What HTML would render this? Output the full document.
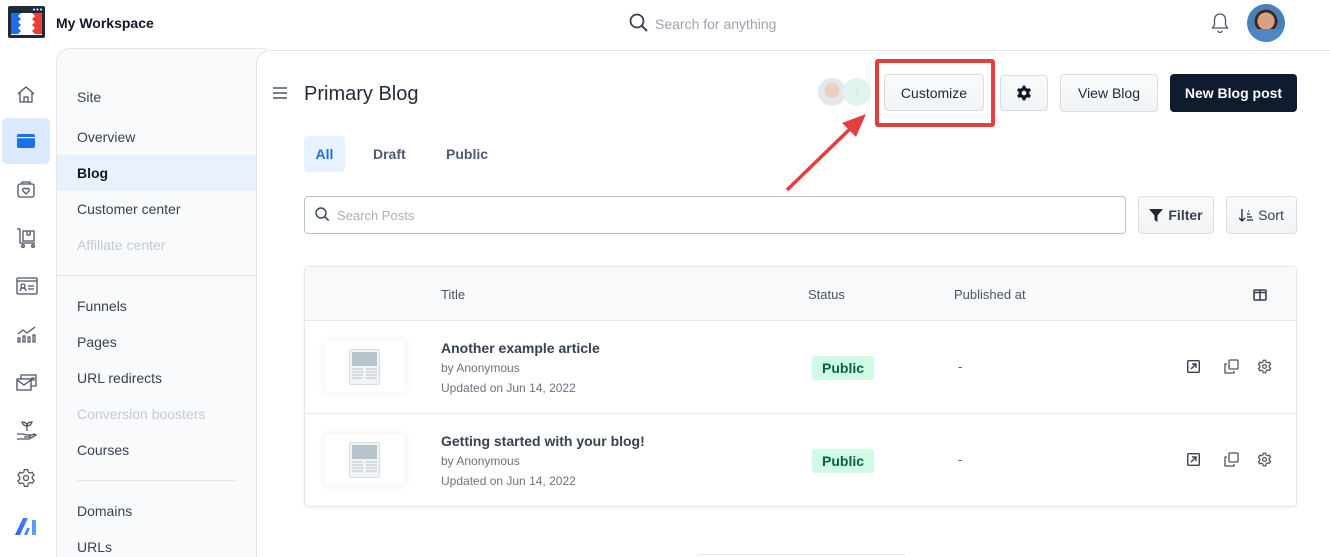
<!DOCTYPE html>
<html style="overflow:hidden;width:1330px;height:557px"><head><meta charset="utf-8">
<style>
*{box-sizing:border-box;margin:0;padding:0}
body{width:1330px;height:557px;overflow:hidden;background:#fff;font-family:"Liberation Sans",sans-serif;color:#1f2937;position:relative}
.a{position:absolute}
.nav{font-size:14px;color:#374151}
.btn{position:absolute;border:1px solid #d8dde3;border-radius:4px;background:linear-gradient(#fafbfc,#f1f3f5);font-size:14px;color:#1f2937;display:flex;align-items:center;justify-content:center;gap:5px}
.ic{position:absolute;left:16px}
.row{position:absolute;left:305px;width:991px;border-top:1px solid #e5e7eb}
.thumb{position:absolute;left:20px;top:20px;width:80px;height:51px;background:#fff;border-radius:4px;box-shadow:0 0 10px rgba(0,0,0,.08)}
.badge{position:absolute;left:507px;background:#d1fae5;color:#065f46;font-size:14px;font-weight:bold;padding:4px 10px;border-radius:3px}
</style></head><body>
<svg class="a" style="left:8px;top:6px" width="37" height="32" viewBox="0 0 37 32"><rect width="37" height="32" rx="2" fill="#1f2937"/><rect x="3" y="7" width="31" height="22" fill="#fff"/><path d="M3 7h10l-3 3 3 3-3 3 3 3-3 3 3 3-3 3h-7z" fill="#1d6ee8"/><path d="M34 7h-10l3 3-3 3 3 3-3 3 3 3-3 3 3 3h7z" fill="#ef3e36"/><circle cx="26" cy="3.5" r="1" fill="#fff"/><circle cx="29.5" cy="3.5" r="1" fill="#fff"/><circle cx="33" cy="3.5" r="1" fill="#fff"/></svg>
<div class="a" style="left:56px;top:15px;font-size:14px;font-weight:bold;color:#111827">My Workspace</div>
<svg class="a" style="left:629px;top:13px" width="20" height="20" viewBox="0 0 20 20"><circle cx="8" cy="8" r="6.5" fill="none" stroke="#374151" stroke-width="1.8"/><path d="M13 13l5 5" stroke="#374151" stroke-width="2"/></svg>
<div class="a" style="left:655px;top:16px;font-size:14px;color:#9ca3af">Search for anything</div>
<svg class="a" style="left:1211px;top:12px" width="18" height="22" viewBox="0 0 18 22"><path d="M9 2c-3.5 0-5.5 2.5-5.5 6v5l-2 3h15l-2-3V8c0-3.5-2-6-5.5-6z" fill="none" stroke="#4b5563" stroke-width="1.3"/><path d="M7 18.5a2 2 0 004 0" fill="none" stroke="#4b5563" stroke-width="1.3"/></svg>
<div class="a" style="left:1247px;top:4px;width:38px;height:38px;border-radius:50%;background:radial-gradient(circle at 50% 45%,#d9a184 0 30%,#3a2a1e 31% 40%,#4a7fb8 41%);overflow:hidden"><div style="position:absolute;left:0;right:0;bottom:0;height:13px;background:#4f86c6"></div></div>
<div class="a" style="left:2px;top:118px;width:48px;height:46px;background:#dbeafe;border-radius:5px"></div>
<svg class="ic" style="top:84px" width="20" height="20" viewBox="0 0 20 20" fill="none" stroke="#4b5563" stroke-width="1.3"><path d="M2 10L10 3l8 7M4 8.5V18h12V8.5M8 18v-5h4v5"/></svg>
<svg class="ic" style="top:131px" width="20" height="20" viewBox="0 0 20 20"><rect x="1" y="3" width="18" height="14" rx="2" fill="#1d6ee8"/><rect x="1" y="6" width="18" height="1.2" fill="#fff"/></svg>
<svg class="ic" style="top:179px" width="20" height="20" viewBox="0 0 20 20" fill="none" stroke="#4b5563" stroke-width="1.3"><rect x="2" y="5" width="16" height="13" rx="2"/><path d="M6 5V3h8v2M10 15l-3-3a1.6 1.6 0 013-2 1.6 1.6 0 013 2z"/></svg>
<svg class="ic" style="top:227px" width="22" height="22" viewBox="0 0 22 22" fill="none" stroke="#4b5563" stroke-width="1.3"><path d="M1 2h3v14h15M7 4h11v10H7zM11 4v4h3V4"/><circle cx="7" cy="19" r="1.3"/><circle cx="17" cy="19" r="1.3"/></svg>
<svg class="ic" style="top:276px" width="22" height="20" viewBox="0 0 22 20" fill="none" stroke="#4b5563" stroke-width="1.3"><rect x="1" y="2" width="20" height="16" rx="1"/><path d="M1 5h20"/><circle cx="7" cy="10" r="2"/><path d="M4 15a3 3 0 016 0M12 10h6M12 13h6"/></svg>
<svg class="ic" style="top:324px" width="22" height="20" viewBox="0 0 22 20" fill="none" stroke="#4b5563" stroke-width="1.2"><path d="M2 10l5-4 4 3 8-6"/><rect x="2" y="14" width="2" height="4"/><rect x="7" y="12" width="2" height="6"/><rect x="12" y="13" width="2" height="5"/><rect x="17" y="11" width="2" height="7"/></svg>
<svg class="ic" style="top:371px" width="22" height="22" viewBox="0 0 22 22" fill="none" stroke="#4b5563" stroke-width="1.3"><rect x="1" y="8" width="14" height="11"/><path d="M1 9l7 5 7-5M5 8V4h15v11h-5M16 7h2v2h-2z"/></svg>
<svg class="ic" style="top:419px" width="22" height="22" viewBox="0 0 22 22" fill="none" stroke="#4b5563" stroke-width="1.3"><path d="M11 12V5M11 7c-2 0-4-1-5-4 3 0 5 1 5 4zM11 7c2 0 4-1 5-4-3 0-5 1-5 4zM1 15h5l5 1h3v2H8M1 20h12l7-4-2-1-5 2"/></svg>
<svg class="ic" style="top:468px" width="20" height="20" viewBox="0 0 24 24" fill="none" stroke="#4b5563" stroke-width="1.5"><circle cx="12" cy="12" r="3"/><path d="M10 2h4l.6 2.8 2.3 1.3 2.7-1 2 3.4-2.1 1.9v2.6l2.1 1.9-2 3.4-2.7-1-2.3 1.3L14 22h-4l-.6-2.8-2.3-1.3-2.7 1-2-3.4 2.1-1.9v-2.6L2.4 8.5l2-3.4 2.7 1 2.3-1.3z"/></svg>
<svg class="ic" style="top:516px;left:14px" width="24" height="20" viewBox="0 0 24 20"><defs><linearGradient id="g" x1="0" x2="1"><stop offset="0" stop-color="#2563eb"/><stop offset="1" stop-color="#60a5fa"/></linearGradient></defs><path d="M1 19L9 2h5L6 19zM10 19l3-7h3l-3 7zM18 19V4h4v15z" fill="url(#g)"/></svg>
<div class="a" style="left:56px;top:48px;width:210px;height:509px;background:#f9fafb;border:1px solid #e5e7eb;border-bottom:none;border-radius:14px 0 0 0"></div>
<div class="a" style="left:57px;top:155px;width:200px;height:36px;background:#e8f1fd"></div>
<div class="a nav" style="left:77px;top:89px">Site</div>
<div class="a nav" style="left:77px;top:129px">Overview</div>
<div class="a nav" style="left:77px;top:165px;font-weight:bold;color:#111827">Blog</div>
<div class="a nav" style="left:77px;top:201px">Customer center</div>
<div class="a nav" style="left:77px;top:237px;color:#c4c9d0">Affiliate center</div>
<div class="a" style="left:57px;top:275px;width:200px;height:1px;background:#e5e7eb"></div>
<div class="a nav" style="left:77px;top:298px">Funnels</div>
<div class="a nav" style="left:77px;top:334px">Pages</div>
<div class="a nav" style="left:77px;top:370px">URL redirects</div>
<div class="a nav" style="left:77px;top:406px;color:#c4c9d0">Conversion boosters</div>
<div class="a nav" style="left:77px;top:442px">Courses</div>
<div class="a" style="left:77px;top:480px;width:159px;height:1px;background:#e5e7eb"></div>
<div class="a nav" style="left:77px;top:503px">Domains</div>
<div class="a nav" style="left:77px;top:539px">URLs</div>
<div class="a" style="left:256px;top:50px;width:1074px;height:507px;background:#fff;border:1px solid #dfe4ea;border-right:none;border-bottom:none;border-radius:14px 0 0 0"></div>
<svg class="a" style="left:273px;top:87px" width="14" height="12" viewBox="0 0 14 12"><path d="M0 1h14M0 6h14M0 11h14" stroke="#4b5563" stroke-width="1.6"/></svg>
<div class="a" style="left:304px;top:83px;font-size:20px;color:#1f2937">Primary Blog</div>
<div class="a" style="left:818px;top:78px;width:28px;height:28px;border-radius:50%;background:radial-gradient(circle at 50% 45%,#e4c1a8 0 35%,#d9dfe6 36%);opacity:.75"></div>
<div class="a" style="left:843px;top:78px;width:28px;height:28px;border-radius:50%;background:#e0f5f0;color:#c7e8e0;font-size:11px;text-align:center;line-height:28px">I</div>
<div class="btn" style="left:884px;top:74px;width:100px;height:37px">Customize</div>
<div class="a" style="left:875px;top:59px;width:120px;height:68px;border:4px solid #e53e3e;border-radius:3px"></div>
<div class="btn" style="left:1000px;top:75px;width:48px;height:36px"><svg width="16" height="16" viewBox="0 0 24 24"><path fill="#111827" fill-rule="evenodd" d="M10 1h4l.7 3.2 2.6 1.5 3.1-1 2 3.5-2.4 2.2v3.2l2.4 2.2-2 3.5-3.1-1-2.6 1.5L14 23h-4l-.7-3.2-2.6-1.5-3.1 1-2-3.5 2.4-2.2v-3.2L1.6 8.2l2-3.5 3.1 1 2.6-1.5zM12 8.5a3.5 3.5 0 100 7 3.5 3.5 0 000-7z"/></svg></div>
<div class="btn" style="left:1060px;top:74px;width:98px;height:38px">View Blog</div>
<div class="btn" style="left:1170px;top:74px;width:127px;height:38px;background:#111b2e;border-color:#111b2e;color:#fff;font-weight:bold">New Blog post</div>
<svg class="a" style="left:780px;top:110px" width="90" height="85" viewBox="0 0 90 85"><path d="M7 80L75 14" stroke="#e53e3e" stroke-width="3.5"/><path d="M86 4L62 13l14 14z" fill="#e53e3e"/></svg>
<div class="a" style="left:304px;top:136px;width:41px;height:36px;background:#e8f2fe;border-radius:4px;color:#1d6ee8;font-size:14px;font-weight:bold;text-align:center;line-height:36px">All</div>
<div class="a" style="left:373px;top:146px;font-size:14px;font-weight:bold;color:#4a5b74">Draft</div>
<div class="a" style="left:446px;top:146px;font-size:14px;font-weight:bold;color:#4a5b74">Public</div>
<div class="a" style="left:304px;top:196px;width:822px;height:38px;border:1px solid #b7c3cf;border-radius:4px"></div>
<svg class="a" style="left:315px;top:207px" width="15" height="15" viewBox="0 0 15 15"><circle cx="6" cy="6" r="5" fill="none" stroke="#374151" stroke-width="1.4"/><path d="M9.7 9.7l4 4" stroke="#374151" stroke-width="1.5"/></svg>
<div class="a" style="left:337px;top:208px;font-size:13px;color:#a9b1bb">Search Posts</div>
<div class="btn" style="left:1138px;top:196px;width:76px;height:38px;font-weight:bold;color:#374151"><svg width="14" height="13" viewBox="0 0 14 13"><path d="M0 0h14L8.5 6.5V13L5.5 11V6.5z" fill="#1f2937"/></svg>Filter</div>
<div class="btn" style="left:1226px;top:196px;width:71px;height:38px;color:#374151"><svg width="14" height="13" viewBox="0 0 14 13" fill="none" stroke="#1f2937" stroke-width="1.3"><path d="M3 0v12M0 9l3 3 3-3M8 5h3M8 8h5M8 11h6M9 2h1"/></svg>Sort</div>
<div class="a" style="left:304px;top:266px;width:993px;height:241px;border:1px solid #e5e7eb;border-radius:4px;box-shadow:0 1px 3px rgba(0,0,0,.06)"></div>
<div class="a" style="left:305px;top:267px;width:991px;height:53px;background:#f8f9fa"></div>
<div class="a" style="left:441px;top:287px;font-size:13px;color:#4b5563">Title</div>
<div class="a" style="left:808px;top:287px;font-size:13px;color:#4b5563">Status</div>
<div class="a" style="left:954px;top:287px;font-size:13px;color:#4b5563">Published at</div>
<svg class="a" style="left:1253px;top:289px" width="14" height="12" viewBox="0 0 14 12" fill="none" stroke="#374151" stroke-width="1.6"><rect x="1" y="1" width="12" height="10" rx="1"/><path d="M7 1v10M1 3.5h12"/></svg>
<div class="row" style="top:320px;height:93px">
 <div class="thumb"><svg style="position:absolute;left:24px;top:8px" width="31" height="36" viewBox="0 0 31 36"><rect x=".5" y=".5" width="30" height="35" rx="2" fill="#f1f3f5" stroke="#d5dbe1"/><rect x="3" y="3" width="25" height="14" fill="#b8c4cc"/><path d="M3 20h11M3 23h11M3 26h11M3 29h11M17 20h11M17 23h11M17 26h11M17 29h11" stroke="#b8c4cc"/></svg></div>
 <div class="a" style="left:136px;top:19px;font-size:14px;font-weight:bold;color:#374151">Another example article</div>
 <div class="a" style="left:136px;top:40px;font-size:12px;color:#6b7280">by Anonymous</div>
 <div class="a" style="left:136px;top:60px;font-size:12px;color:#6b7280">Updated on Jun 14, 2022</div>
 <div class="badge" style="top:35px">Public</div>
 <div class="a" style="left:653px;top:38px;font-size:13px;color:#4b5563">-</div>
</div>
<div class="row" style="top:413px;height:93px">
 <div class="thumb"><svg style="position:absolute;left:24px;top:8px" width="31" height="36" viewBox="0 0 31 36"><rect x=".5" y=".5" width="30" height="35" rx="2" fill="#f1f3f5" stroke="#d5dbe1"/><rect x="3" y="3" width="25" height="14" fill="#b8c4cc"/><path d="M3 20h11M3 23h11M3 26h11M3 29h11M17 20h11M17 23h11M17 26h11M17 29h11" stroke="#b8c4cc"/></svg></div>
 <div class="a" style="left:136px;top:19px;font-size:14px;font-weight:bold;color:#374151">Getting started with your blog!</div>
 <div class="a" style="left:136px;top:40px;font-size:12px;color:#6b7280">by Anonymous</div>
 <div class="a" style="left:136px;top:60px;font-size:12px;color:#6b7280">Updated on Jun 14, 2022</div>
 <div class="badge" style="top:35px">Public</div>
 <div class="a" style="left:653px;top:38px;font-size:13px;color:#4b5563">-</div>
</div>
<svg class="a" style="left:1187px;top:360px" width="13" height="13" viewBox="0 0 13 13"><rect x=".7" y=".7" width="11.6" height="11.6" rx="1" fill="none" stroke="#374151" stroke-width="1.4"/><path d="M4 9l5-5M5 4h4v4" stroke="#374151" stroke-width="1.4" fill="none"/></svg>
<svg class="a" style="left:1224px;top:359px" width="15" height="15" viewBox="0 0 15 15" fill="none" stroke="#4b5563" stroke-width="1.3"><rect x="5" y="1" width="9" height="9" rx="1"/><path d="M3 5H1v9h9v-2"/></svg>
<svg class="a" style="left:1257px;top:359px" width="15" height="15" viewBox="0 0 24 24" fill="none" stroke="#4b5563" stroke-width="2"><circle cx="12" cy="12" r="3"/><path d="M10 2h4l.6 2.8 2.3 1.3 2.7-1 2 3.4-2.1 1.9v2.6l2.1 1.9-2 3.4-2.7-1-2.3 1.3L14 22h-4l-.6-2.8-2.3-1.3-2.7 1-2-3.4 2.1-1.9v-2.6L2.4 8.5l2-3.4 2.7 1 2.3-1.3z"/></svg>
<svg class="a" style="left:1187px;top:453px" width="13" height="13" viewBox="0 0 13 13"><rect x=".7" y=".7" width="11.6" height="11.6" rx="1" fill="none" stroke="#374151" stroke-width="1.4"/><path d="M4 9l5-5M5 4h4v4" stroke="#374151" stroke-width="1.4" fill="none"/></svg>
<svg class="a" style="left:1224px;top:452px" width="15" height="15" viewBox="0 0 15 15" fill="none" stroke="#4b5563" stroke-width="1.3"><rect x="5" y="1" width="9" height="9" rx="1"/><path d="M3 5H1v9h9v-2"/></svg>
<svg class="a" style="left:1257px;top:452px" width="15" height="15" viewBox="0 0 24 24" fill="none" stroke="#4b5563" stroke-width="2"><circle cx="12" cy="12" r="3"/><path d="M10 2h4l.6 2.8 2.3 1.3 2.7-1 2 3.4-2.1 1.9v2.6l2.1 1.9-2 3.4-2.7-1-2.3 1.3L14 22h-4l-.6-2.8-2.3-1.3-2.7 1-2-3.4 2.1-1.9v-2.6L2.4 8.5l2-3.4 2.7 1 2.3-1.3z"/></svg>
<div class="a" style="left:697px;top:554px;width:208px;height:3px;border:1px solid #e5e7eb;border-bottom:none;border-radius:6px 6px 0 0"></div>
</body></html>
